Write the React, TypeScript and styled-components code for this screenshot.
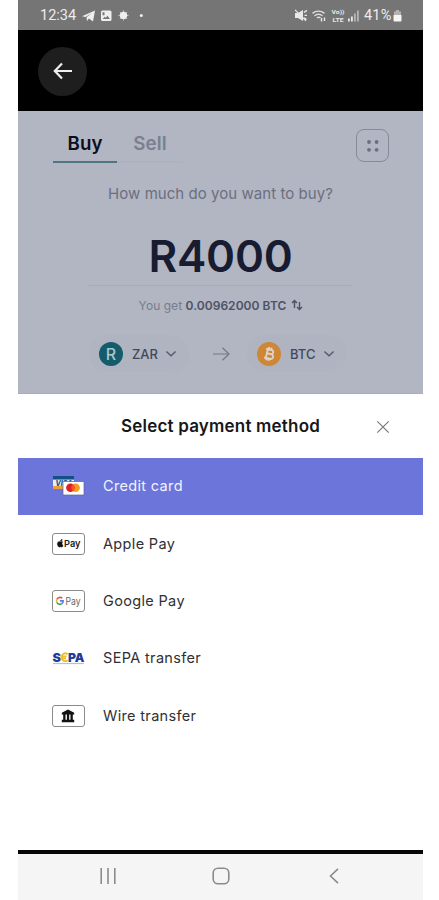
import React from 'react';
import styled, { createGlobalStyle } from 'styled-components';

const Global = createGlobalStyle`
  * { box-sizing: border-box; }
  body { margin: 0; background: #fff; font-family: Inter, "Liberation Sans", sans-serif; }
  svg { display: block; flex: none; }
`;

const Phone = styled.div`
  width: 405px;
  height: 900px;
  margin-left: 18px;
  display: flex;
  flex-direction: column;
  overflow: hidden;
  background: #fff;
`;

const StatusBar = styled.header`
  height: 30px;
  flex: none;
  display: flex;
  align-items: center;
  justify-content: space-between;
  padding: 1px 21px 0 22px;
  background: #757575;
  color: #ececec;
  font: 400 14.5px/20px Roboto, sans-serif;
`;

const Cluster = styled.div`
  display: flex;
  align-items: center;
`;

const Clock = styled.span`
  width: 42px;
`;

const Battery = styled.span`
  width: 29px;
  margin-left: 4px;
  letter-spacing: 0.2px;
`;

const AppBar = styled.div`
  height: 81px;
  flex: none;
  display: flex;
  align-items: center;
  padding: 1px 0 0 20px;
  background: #000;
`;

const BackButton = styled.button`
  width: 49px;
  height: 49px;
  display: grid;
  place-items: center;
  padding: 0;
  border: 0;
  border-radius: 50%;
  background: #1e1e1e;
`;

const Exchange = styled.section`
  height: 283px;
  flex: none;
  display: flex;
  flex-direction: column;
  background: #b2b5c2;
  border-bottom: 1px solid #a9acba;
`;

const TopRow = styled.div`
  height: 52px;
  display: flex;
  align-items: flex-end;
  justify-content: space-between;
  padding: 0 34px 0 35px;
`;

const Tabs = styled.div`
  display: flex;
`;

const Tab = styled.button<{ $active?: boolean }>`
  width: ${p => (p.$active ? 64 : 66)}px;
  height: 35px;
  padding: 0 0 2px;
  border: 0;
  border-bottom: 2px solid ${p => (p.$active ? '#4d7780' : '#aeb2be')};
  background: none;
  color: ${p => (p.$active ? '#0c0e20' : '#7b8090')};
  font: 600 18.7px/24px Inter, sans-serif;
  letter-spacing: 0.1px;
`;

const MenuButton = styled.button`
  width: 33px;
  height: 33px;
  margin-bottom: 1px;
  display: grid;
  place-items: center;
  padding: 0;
  border: 1px solid #858a98;
  border-radius: 8px;
  background: none;
`;

const Prompt = styled.p`
  margin: 21px 0 0;
  text-align: center;
  font-size: 15px;
  line-height: 20px;
  letter-spacing: 0.05px;
  color: #6a7080;
`;

const Amount = styled.div`
  width: 265px;
  height: 82px;
  margin: 0 auto;
  padding-top: 25px;
  border-bottom: 1px solid #a8acb9;
  text-align: center;
  font-size: 44px;
  line-height: 54px;
  font-weight: 600;
  letter-spacing: -0.2px;
  color: #171c30;
`;

const Quote = styled.div`
  height: 20px;
  margin-top: 9px;
  margin-bottom: 1px;
  padding-left: 1px;
  display: flex;
  justify-content: center;
  align-items: center;
  gap: 5px;
  font-size: 12px;
  letter-spacing: 0.05px;
  color: #777d8c;
  b { font-weight: 600; color: #4d5364; }
`;

const PairRow = styled.div`
  display: flex;
  align-items: center;
  margin: 19px 0 0 71px;
`;

const CurrencyPill = styled.button`
  width: 100px;
  height: 37px;
  display: flex;
  align-items: center;
  padding: 0 10px;
  border: 0;
  border-radius: 18px;
  background: #b0b4c1;
  color: #42485a;
  font: 500 13px/18px Inter, sans-serif;
`;

const Code = styled.span`
  width: 33px;
  margin-left: 9px;
  text-align: left;
`;

const PairArrow = styled.div`
  width: 58px;
  display: flex;
  justify-content: center;
  padding-left: 6px;
`;

const Sheet = styled.section`
  height: 456px;
  flex: none;
  background: #fff;
`;

const SheetHeader = styled.div`
  height: 64px;
  display: grid;
  grid-template-columns: 80px 1fr 80px;
  align-items: center;
  justify-items: center;
  padding-top: 1px;
`;

const Title = styled.h2`
  margin: 0;
  padding-bottom: 1px;
  font-size: 17px;
  line-height: 24px;
  font-weight: 600;
  letter-spacing: 0.2px;
  white-space: nowrap;
  color: #17171a;
`;

const Method = styled.button<{ $selected?: boolean }>`
  width: 100%;
  height: 57.4px;
  display: flex;
  align-items: center;
  gap: 18px;
  padding: 0 34px 0.8px;
  border: 0;
  background: ${p => (p.$selected ? '#6b75da' : '#fff')};
  color: ${p => (p.$selected ? '#f2f3ff' : '#303033')};
  font: 400 14.5px/20px Inter, sans-serif;
  letter-spacing: 0.34px;
`;

const Badge = styled.span<{ $bordered?: boolean }>`
  width: 33px;
  height: 22px;
  flex: none;
  display: flex;
  align-items: center;
  justify-content: center;
  border: ${p => (p.$bordered ? '1px solid #8b8b8b' : '0')};
  border-radius: 3px;
`;

const NavBar = styled.nav`
  height: 50px;
  flex: none;
  display: grid;
  grid-template-columns: 180px 46px 180px;
  align-items: center;
  justify-items: center;
  padding-bottom: 2px;
  border-top: 4px solid #050807;
  background: #f5f5f5;
`;

const Chevron = () => (
  <svg width="12" height="8" viewBox="0 0 12 8" fill="none" stroke="#535969" strokeWidth="1.3">
    <path d="M1.4 1.5 6 5.8l4.6-4.3" />
  </svg>
);

const RandCoin = () => (
  <svg width="24" height="24" viewBox="0 0 24 24">
    <circle cx="12" cy="12" r="12" fill="#145b6b" />
    <text x="12" y="17.8" textAnchor="middle" fontFamily="Inter" fontSize="16" fontWeight="500" fill="#a9c6cf">R</text>
  </svg>
);

const BitcoinCoin = () => (
  <svg width="24" height="24" viewBox="0 0 24 24">
    <circle cx="12" cy="12" r="12" fill="#cd8735" />
    <g transform="rotate(13 12 12)" fill="none" stroke="#dfd3ca" strokeWidth="1.9">
      <path d="M8 7.5h5.2c3.4 0 3.4 4.2 0 4.2H9.8M9.8 7.5v9M8 16.5h5.8c3.8 0 3.8-4.8 0-4.8M10.7 5.2v2.3M13.2 5.2v2.3M10.7 16.5v2.3M13.2 16.5v2.3" />
    </g>
  </svg>
);

const CardIcon = () => (
  <svg width="33" height="22" viewBox="0 0 33 22">
    <path d="M1 1h21v13H1z" fill="#e9eef3" />
    <path d="M1 1h21v3.6H1z" fill="#164f87" />
    <path d="M1 11h21v3H1z" fill="#e9a13c" />
    <text x="3.5" y="10.6" fontFamily="Inter" fontSize="7" fontWeight="800" fontStyle="italic" letterSpacing="0" fill="#255586" textLength="17" lengthAdjust="spacingAndGlyphs">VISA</text>
    <path d="M11 6.5h21V20H11z" fill="#fff" stroke="#5c629a" strokeWidth=".7" />
    <circle cx="23.6" cy="12.8" r="4.3" fill="#f49b22" />
    <circle cx="18.4" cy="12.8" r="4.3" fill="#df2029" />
    <path d="M21 9.4a4.3 4.3 0 0 1 0 6.8 4.3 4.3 0 0 1 0-6.8" fill="#f35e1d" />
  </svg>
);

const ApplePay = () => (
  <svg width="31" height="20" viewBox="0 0 31 20">
    <path d="M9.6 7.8c-.9-.5-1.5.1-2 .1s-1.1-.5-1.9-.2C4 8.3 4.2 10.6 5 12c.8 1.4 1.4 1.2 2.5.8 1 .4 1.8.5 2.6-1.1-1.4-.8-1.5-2.7-.5-3.9ZM7.5 7.3c0-1.2.7-1.8 1.6-2 .1 1.2-.6 2-1.6 2Z" fill="#111" stroke="#111" strokeWidth=".5" />
    <text x="11" y="13.2" fontFamily="Inter" fontSize="9.5" fontWeight="600" letterSpacing="0" fill="#222" textLength="16.5" lengthAdjust="spacingAndGlyphs">Pay</text>
  </svg>
);

const GooglePay = () => (
  <svg width="31" height="20" viewBox="0 0 31 20">
    <g transform="translate(-.8 0)" fill="none" strokeWidth="1.6">
      <path d="M4.7 8.3A3.4 3.4 0 0 1 10 7.2" stroke="#df5448" />
      <path d="M4.7 8.3a3.4 3.4 0 0 0 0 3.2" stroke="#e9b632" />
      <path d="M4.7 11.5a3.4 3.4 0 0 0 5 1.2" stroke="#43a35a" />
      <path d="M9.7 12.7a3.3 3.3 0 0 0 1.2-2.8H7.7" stroke="#4a82dc" />
    </g>
    <text x="12.5" y="13.5" fontFamily="Inter" fontSize="10" letterSpacing="0" fill="#666" textLength="15" lengthAdjust="spacingAndGlyphs">Pay</text>
  </svg>
);

const Sepa = () => (
  <svg width="33" height="22" viewBox="0 0 33 22">
    <g fontFamily="Inter" fontSize="12" fontWeight="900" letterSpacing="0" fill="#233b9b">
      <text x=".5" y="14.5" textLength="8.5" lengthAdjust="spacingAndGlyphs">S</text>
      <text x="16" y="14.5" textLength="16.5" lengthAdjust="spacingAndGlyphs">PA</text>
    </g>
    <path d="M15.7 7.2a3.8 3.8 0 1 0 0 6M8.5 9.3h6M8.5 11.3h5.5" fill="none" stroke="#f0bf2c" strokeWidth="1.8" />
    <path d="M1 16.5h31" stroke="#b6bedb" strokeWidth="1.2" />
  </svg>
);

const Bank = () => (
  <svg width="31" height="20" viewBox="0 0 31 20" fill="#111">
    <path d="M15 3.5 8.8 6.8v1.7h12.4V6.8zM10.2 8.5h2.3v5.5h-2.3zM13.9 8.5h2.3v5.5h-2.3zM17.5 8.5h2.3v5.5h-2.3zM8.8 13.8h12.4v2.4H8.8z" />
  </svg>
);

const methods = [
  { name: 'Credit card', icon: <CardIcon />, bordered: false },
  { name: 'Apple Pay', icon: <ApplePay />, bordered: true },
  { name: 'Google Pay', icon: <GooglePay />, bordered: true },
  { name: 'SEPA transfer', icon: <Sepa />, bordered: false },
  { name: 'Wire transfer', icon: <Bank />, bordered: true },
];

const StatusNotifications = () => (
  <svg width="64" height="16" viewBox="0 .6 64 16" fill="#eee">
    <path d="M0 8.8 13 3l-2 11-4-3-2 2.5-.5-3.6L10 5.5 3.5 9.6z" />
    <path fillRule="evenodd" d="M20.5 3h7.5a1.5 1.5 0 0 1 1.5 1.5V12a1.5 1.5 0 0 1-1.5 1.5h-7.5A1.5 1.5 0 0 1 19 12V4.5A1.5 1.5 0 0 1 20.5 3Zm0 1.8v3h2v-3Zm.2 6.7h7.2L25.5 8.3l-1.8 2-1-1z" />
    <path d="M41.5 2.8v10.4M36.3 8h10.4M37.9 4.4l7.2 7.2M45.1 4.4l-7.2 7.2" stroke="#bdbdbd" strokeWidth="1" />
    <circle cx="41.5" cy="8" r="3.7" />
    <circle cx="59.3" cy="8" r="1.5" />
  </svg>
);

const StatusRadios = () => (
  <svg width="66" height="16" viewBox="0 .6 66 16" fill="#e8e8e8">
    <path d="M1 5.5h3L9 2.5v11L4 10.5H1z" />
    <path d="m1 2.5 11 11M10 5l3-2M10.5 8h2.5M10 10.5l2.5 1.5" stroke="#e8e8e8" strokeWidth="1.3" />
    <path d="M18.5 6c3.5-3 8.5-3 12 0M20.5 8.5c2.5-2 5.5-2 8 0M23 10.5c1-.8 2.5-.8 3.5 0" fill="none" stroke="#ddd" strokeWidth="1.4" />
    <path d="M27.5 10.5v3.5M30.5 10v3.5" stroke="#e8e8e8" strokeWidth="1.4" />
    <text x="37.5" y="6.4" fontFamily="Roboto" fontSize="5" fontWeight="700" textLength="13" lengthAdjust="spacingAndGlyphs">Vo))</text>
    <text x="38.5" y="14.2" fontFamily="Roboto" fontSize="5.5" fontWeight="700" textLength="11" lengthAdjust="spacingAndGlyphs">LTE</text>
    <path d="M54 11h1.8v3H54zM57 9h1.8v5H57z" />
    <path d="M60 6h1.8v8H60zM63 3h1.8v11H63z" fill="#b5b5b5" />
  </svg>
);

export default function App() {
  return (
    <>
      <Global />
      <Phone>
        <StatusBar>
          <Cluster>
            <Clock>12:34</Clock>
            <StatusNotifications />
          </Cluster>
          <Cluster>
            <StatusRadios />
            <Battery>41%</Battery>
            <svg width="9" height="14" viewBox="0 0 9 14">
              <path d="M3 1h3v1.5h2V6H1V2.5h2z" fill="#b3b3b3" />
              <path d="M.5 6h8v5.5q0 1-1 1h-6q-1 0-1-1z" fill="#f5f5f5" />
            </svg>
          </Cluster>
        </StatusBar>
        <AppBar>
          <BackButton aria-label="Back">
            <svg width="20" height="18" viewBox="0 0 20 18" fill="none" stroke="#eee" strokeWidth="2.2">
              <path d="M19 9H2M9 1.5 1.8 9 9 16.5" />
            </svg>
          </BackButton>
        </AppBar>
        <Exchange>
          <TopRow>
            <Tabs>
              <Tab $active>Buy</Tab>
              <Tab>Sell</Tab>
            </Tabs>
            <MenuButton aria-label="Menu">
              <svg width="14" height="14" viewBox="0 0 14 14" fill="#6a7080">
                <circle cx="3" cy="3" r="1.9" /><circle cx="10.6" cy="3" r="1.9" />
                <circle cx="3" cy="10.8" r="1.9" /><circle cx="10.6" cy="10.8" r="1.9" />
              </svg>
            </MenuButton>
          </TopRow>
          <Prompt>How much do you want to buy?</Prompt>
          <Amount>R4000</Amount>
          <Quote>
            <span>You get <b>0.00962000 BTC</b></span>
            <svg width="12" height="12" viewBox="0 0 12 12" fill="none" stroke="#4d5364" strokeWidth="1.4">
              <path d="M3.5 9V1.5M1 4l2.5-2.5L6 4M8.5 3v7.5M6 8l2.5 2.5L11 8" />
            </svg>
          </Quote>
          <PairRow>
            <CurrencyPill><RandCoin /><Code>ZAR</Code><Chevron /></CurrencyPill>
            <PairArrow>
              <svg width="17" height="14" viewBox="0 0 17 14" fill="none" stroke="#737987" strokeWidth="1.2">
                <path d="M0 7h16M9.5.8 16 7l-6.5 6.2" />
              </svg>
            </PairArrow>
            <CurrencyPill><BitcoinCoin /><Code>BTC</Code><Chevron /></CurrencyPill>
          </PairRow>
        </Exchange>
        <Sheet>
          <SheetHeader>
            <span />
            <Title>Select payment method</Title>
            <svg width="14" height="14" viewBox="0 0 14 14" stroke="#777" strokeWidth="1.2">
              <path d="m1.3 1.3 11.4 11.4M12.7 1.3 1.3 12.7" />
            </svg>
          </SheetHeader>
          {methods.map((m, i) => (
            <Method key={m.name} $selected={i === 0}>
              <Badge $bordered={m.bordered}>{m.icon}</Badge>
              {m.name}
            </Method>
          ))}
        </Sheet>
        <NavBar>
          <svg width="16" height="16" viewBox="0 0 16 16" stroke="#8b8b8b" strokeWidth="1.6">
            <path d="M1.2 0v16M8 0v16M14.8 0v16" />
          </svg>
          <svg width="18" height="18" viewBox="0 0 18 18" fill="none" stroke="#8b8b8b" strokeWidth="1.6">
            <rect x="1.2" y="1.2" width="15.6" height="15.6" rx="4.8" />
          </svg>
          <svg width="10" height="16" viewBox="0 0 10 16" fill="none" stroke="#8b8b8b" strokeWidth="1.6">
            <path d="M9 .8 1.5 8 9 15.2" />
          </svg>
        </NavBar>
      </Phone>
    </>
  );
}
